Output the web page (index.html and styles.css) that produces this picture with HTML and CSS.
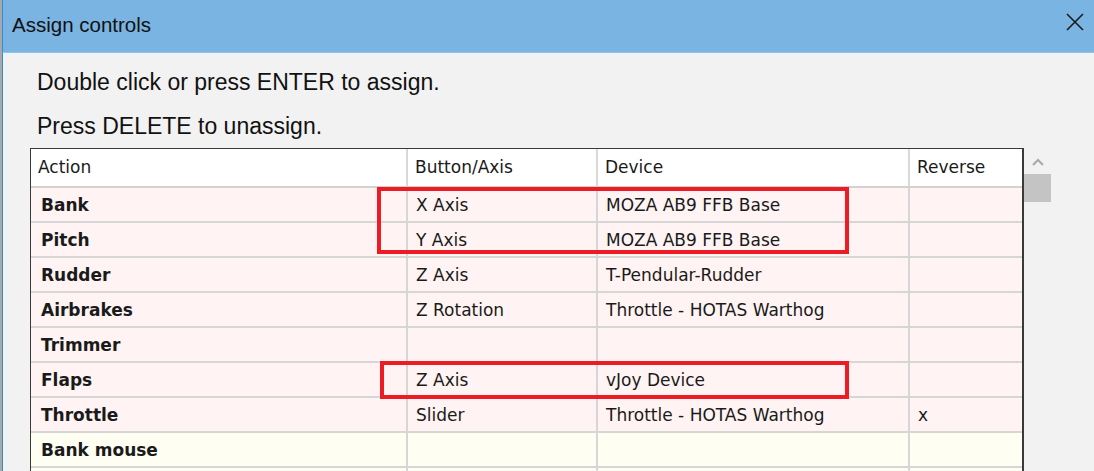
FILE: index.html
```html
<!DOCTYPE html>
<html>
<head>
<meta charset="utf-8">
<link rel="stylesheet" href="styles.css">
</head>
<body>
<div class="window">
  <div class="titlebar">
    <span class="title">Assign controls</span>
    <svg class="close" width="20" height="20" viewBox="0 0 20 20"><path d="M2 2 L18 18 M18 2 L2 18" stroke="#1a1a1a" stroke-width="1.6" fill="none"/></svg>
  </div>
  <div class="content">
    <p class="hint">Double click or press ENTER to assign.</p>
    <p class="hint hint2">Press DELETE to unassign.</p>
    <div class="listrow">
      <div class="grid-wrap">
        <table class="grid">
          <colgroup><col class="c1"><col class="c2"><col class="c3"><col class="c4"></colgroup>
          <thead>
            <tr><th>Action</th><th>Button/Axis</th><th>Device</th><th>Reverse</th></tr>
          </thead>
          <tbody>
            <tr class="pink"><td class="act">Bank</td><td>X Axis</td><td>MOZA AB9 FFB Base</td><td></td></tr>
            <tr class="pink"><td class="act">Pitch</td><td>Y Axis</td><td>MOZA AB9 FFB Base</td><td></td></tr>
            <tr class="pink"><td class="act">Rudder</td><td>Z Axis</td><td>T-Pendular-Rudder</td><td></td></tr>
            <tr class="pink"><td class="act">Airbrakes</td><td>Z Rotation</td><td>Throttle - HOTAS Warthog</td><td></td></tr>
            <tr class="pink"><td class="act">Trimmer</td><td></td><td></td><td></td></tr>
            <tr class="pink"><td class="act">Flaps</td><td>Z Axis</td><td>vJoy Device</td><td></td></tr>
            <tr class="pink"><td class="act">Throttle</td><td>Slider</td><td>Throttle - HOTAS Warthog</td><td>x</td></tr>
            <tr class="yellow"><td class="act">Bank mouse</td><td></td><td></td><td></td></tr>
            <tr class="yellow"><td class="act"></td><td></td><td></td><td></td></tr>
          </tbody>
        </table>
        <div class="mark mark1"></div>
        <div class="mark mark2"></div>
      </div>
      <div class="scrollbar">
        <svg class="up" width="14" height="8" viewBox="0 0 14 8"><path d="M2 7 L7 2 L12 7" stroke="#a8a8a8" stroke-width="2" fill="none"/></svg>
        <div class="thumb"></div>
      </div>
    </div>
  </div>
</div>
</body>
</html>
```
FILE: styles.css
```css
html, body {
  margin: 0;
  padding: 0;
  overflow: hidden;
}
body {
  width: 1094px;
  height: 471px;
  background: #f2f2f2;
}
.window {
  height: 471px;
  border-left: 2px solid #a9a9a9;
  box-sizing: border-box;
  display: flex;
  flex-direction: column;
  overflow: hidden;
}
.titlebar {
  height: 52px;
  flex: none;
  background: #7ab4e2;
  border-left: 1px solid #2f8de0;
  display: flex;
  align-items: center;
  justify-content: space-between;
  padding: 0 9px 0 9px;
  border-bottom: 1px solid #8ec2ea;
}
.title {
  font-family: "Liberation Sans", Arial, sans-serif;
  font-size: 20.5px;
  color: #111;
  margin-top: -3px;
}
.close {
  margin-top: -9px;
}
.content {
  flex: 1;
  border-left: 1px solid #2f8de0;
  padding: 11px 0 0 34px;
  background: #f2f2f2;
}
.hint {
  margin: 0;
  font-family: "Liberation Sans", Arial, sans-serif;
  font-size: 23px;
  line-height: 37px;
  color: #111;
}
.hint2 {
  margin-top: 7px;
}
.listrow {
  display: flex;
  margin-top: 3px;
  margin-left: -7px;
}
.grid-wrap {
  position: relative;
  border: 1px solid #3a3a3a;
  border-right-width: 2px;
  border-bottom: none;
  background: #fff;
}
.grid {
  border-collapse: collapse;
  table-layout: fixed;
  width: 991px;
  font-family: "DejaVu Sans", Verdana, sans-serif;
  font-size: 17px;
  color: #1a1a1a;
}
.c1 { width: 376px; }
.c2 { width: 190px; }
.c3 { width: 312px; }
.c4 { width: 113px; }
.grid th {
  height: 35px;
  font-weight: normal;
  text-align: left;
  padding: 0 0 2px 7px;
  border-left: 2px solid #d9d9d9;
  border-bottom: 2px solid #d2d2d2;
  background: #fff;
  white-space: nowrap;
}
.grid th:first-child { border-left: none; }
.grid td {
  height: 33px;
  padding: 0 0 0 8px;
  border-left: 2px solid #d6d6d6;
  border-bottom: 2px solid #d6d6d6;
  white-space: nowrap;
}
.grid td:first-child { border-left: none; padding-left: 10px; }
.grid td.act { font-weight: bold; }
.pink td { background: #fff3f3; }
.yellow td { background: #fffef2; }
.mark {
  position: absolute;
  border: 4px solid #ed1c24;
  box-sizing: border-box;
}
.mark1 {
  left: 346px;
  top: 38px;
  width: 472px;
  height: 67px;
}
.mark2 {
  left: 349px;
  top: 212px;
  width: 469px;
  height: 38px;
}
.scrollbar {
  width: 27px;
  display: flex;
  flex-direction: column;
  align-items: center;
}
.up {
  margin-top: 10px;
}
.thumb {
  margin-top: 8px;
  width: 27px;
  height: 28px;
  background: #c4c4c4;
}
```
